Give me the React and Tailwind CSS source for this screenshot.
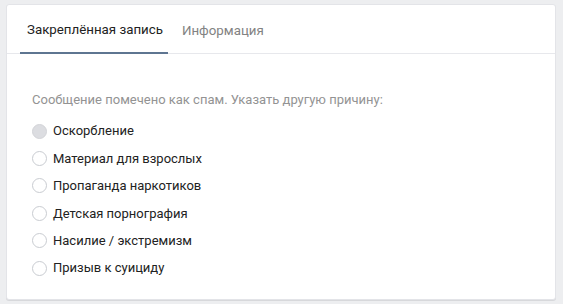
const reasons = [
  'Оскорбление',
  'Материал для взрослых',
  'Пропаганда наркотиков',
  'Детская порнография',
  'Насилие / экстремизм',
  'Призыв к суициду',
];

export default function App() {
  return (
    <div className="w-[563px] h-[304px] bg-[#edeef0] pl-[6px] pr-[7px] pt-[4px] font-['Roboto',sans-serif] text-[13px]">
      <div className="h-[296px] bg-white rounded-[3px] border border-[#e3e4e8] shadow-[0_1px_0_0_#d7d8db]">
        <div className="flex h-[49px] px-[13px] border-b border-[#e7e8ec]">
          <div className="flex items-center pt-[3px] pl-[7px] pr-[5px] border-b-2 border-[#5e7591] -mb-px text-[#222] text-[13.3px]">
            Закреплённая запись
          </div>
          <div className="flex items-center pt-[3px] ml-[7px] px-[7px] text-[#828282] text-[13.3px]">Информация</div>
        </div>
        <div className="pl-[25px] pt-[36px]">
          <div className="text-[#939393] mb-[8px]">
            Сообщение помечено как спам. Указать другую причину:
          </div>
          <div className="flex flex-col">
            {reasons.map((r, i) => (
              <div key={r} className="flex items-center h-[27.4px]">
                <span
                  className={`w-[15px] h-[15px] rounded-full border ${
                    i === 0 ? 'bg-[#dcdde1] border-[#d3d4d8]' : 'bg-white border-[#c9ccd1]'
                  }`}
                />
                <span className="ml-[6px] text-[#222]">{r}</span>
              </div>
            ))}
          </div>
        </div>
      </div>
    </div>
  );
}
